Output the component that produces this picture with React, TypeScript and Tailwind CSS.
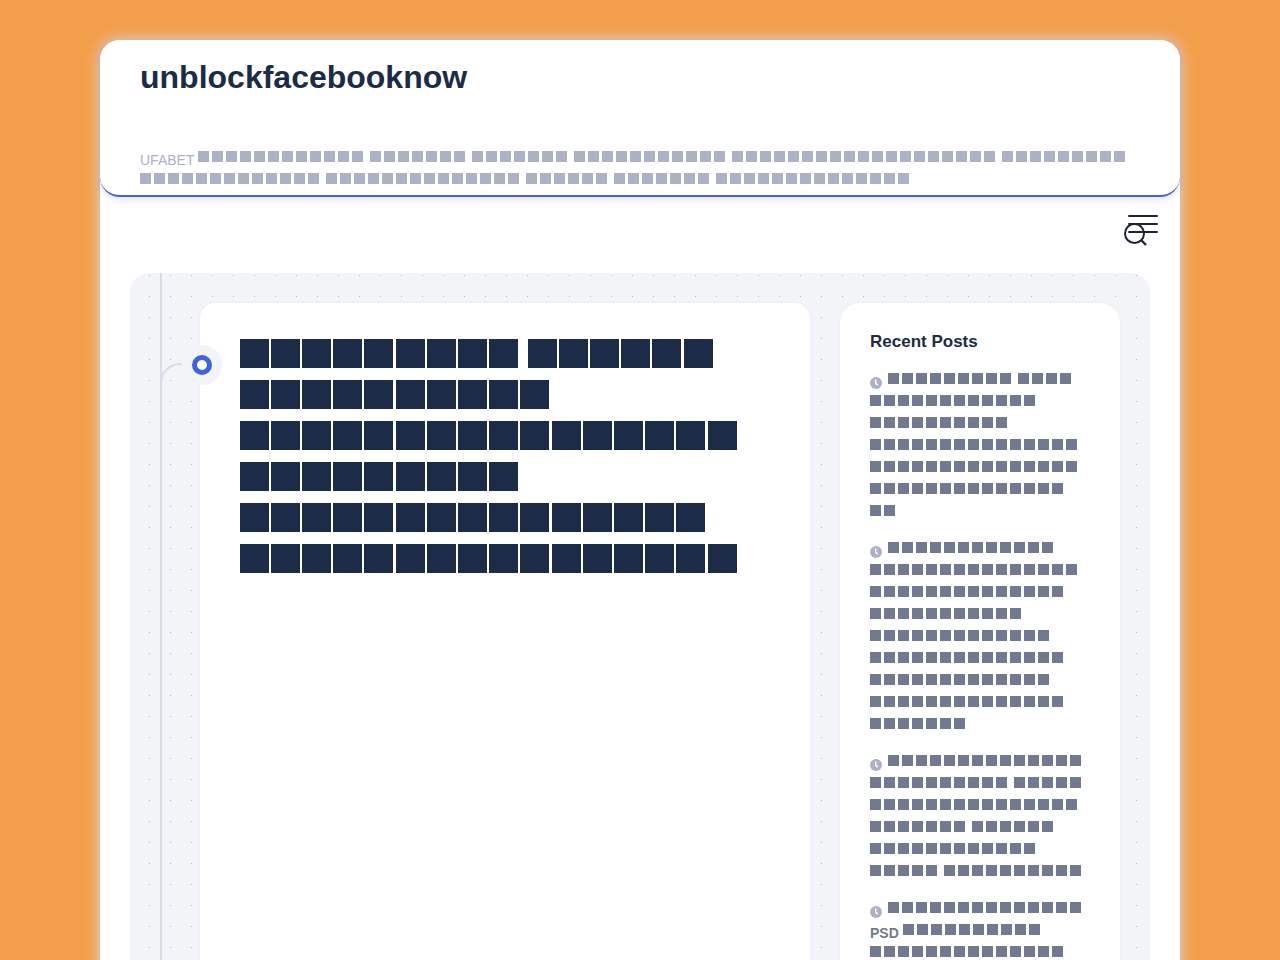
type Line = (number | string)[];

const description: Line[] = [
	['UFABET', 12, 7, 7, 11, 19, 9],
	[13, 14, 6, 7, 14],
];

const title: Line[] = [[9, 6], [10], [16], [9], [15], [16]];

const recentPosts: Line[][] = [
	[[9, 4], [12], [10], [15], [15], [14], [2]],
	[[12], [15], [14], [11], [13], [14], [13], [14], [7]],
	[[14], [10, 5], [15], [7, 6], [12], [5, 10]],
	[[14], ['PSD', 10], [14]],
];

function Word({ count, large }: { count: number; large?: boolean }) {
	return (
		<span className={large ? 'mt-[6px] inline-flex align-top' : 'mt-[2px] inline-flex align-top'}>
			{Array.from({ length: count }, (_, i) => (
				<span
					key={i}
					className={
						large
							? 'mr-[2px] size-[29px] bg-current text-center text-[20px] leading-[29px] nth-[5n]:mr-[3px]'
							: 'mr-[3px] size-[11px] bg-current text-center text-[8px] leading-[11px]'
					}
				>
					■
				</span>
			))}
		</span>
	);
}

function Words({ line, large }: { line: Line; large?: boolean }) {
	return (
		<>
			{line.map((part, i) => (
				<span key={i}>
					{i > 0 && ' '}
					{typeof part === 'number' ? <Word count={part} large={large} /> : part}
				</span>
			))}
		</>
	);
}

function ClockIcon() {
	return (
		<svg viewBox="0 0 12 12" className="mt-[6px] mr-[6px] inline-block size-3 align-top" aria-hidden="true">
			<circle cx="6" cy="6" r="6" fill="#aeb1c6" />
			<path d="M5.7 2.4v3.8l1.9 1.9" fill="none" stroke="#fff" strokeWidth="1.5" />
		</svg>
	);
}

export default function App() {
	return (
		<div className="min-h-screen bg-[#f39e4b] px-6 pt-10 font-['Liberation_Sans',Arial,sans-serif]">
			<div className="mx-auto max-w-[1080px] rounded-t-[20px] bg-white shadow-[0_0_15px_#d5dcec]">
				{/* Site header */}
				<header className="rounded-[20px] border-b-2 border-[#4563c9] bg-white px-10 pt-[18px] pb-[2px] shadow-[0_2px_6px_rgba(64,98,224,0.2)]">
					<a href="#" className="block text-[32px] leading-[38px] font-bold text-[#1c2b47]">
						unblockfacebooknow
					</a>
					<div className="mt-[53px] text-[14px] leading-[22px] text-[#aeb1c6]">
						{description.map((line, i) => (
							<p key={i}>
								<Words line={line} />
							</p>
						))}
					</div>
				</header>

				{/* Menu and search */}
				<nav className="flex h-[76px] justify-end pt-[17px] pr-[21px]">
					<button type="button" aria-label="Menu and search" className="h-8 w-9">
						<svg viewBox="0 0 36 32" className="h-8 w-9" fill="none" stroke="#1c2438" strokeWidth="2">
							<path d="M6 2h28M6 10h28M6 18h28" strokeLinecap="round" />
							<circle cx="11.5" cy="19.5" r="9.5" />
							<path d="M18 26l5 5" strokeWidth="2.4" />
						</svg>
					</button>
				</nav>

				<div className="px-[30px] pb-[30px]">
					<div className="relative flex items-stretch gap-[30px] rounded-[20px] bg-[#f3f4f8] bg-[radial-gradient(circle_at_center,#b4b8c6_0.8px,transparent_1px)] bg-[length:21px_21px] bg-[position:9px_-8px] py-[30px] pr-[30px] pl-[70px]">
						{/* Timeline */}
						<div className="absolute inset-y-0 left-[30px] w-[2px] bg-[#dadbe6]" />
						<div className="absolute top-[90px] left-[30px] h-5 w-[22px] rounded-tl-[20px] border-t-2 border-l-2 border-[#dadbe6]" />

						<main className="relative min-w-0 flex-1 rounded-[15px] bg-white px-10 py-[30px] shadow-[0_0_3px_rgba(28,43,71,0.06)]">
							<span className="absolute top-[42px] left-[-18px] flex size-10 items-center justify-center rounded-full bg-[#f3f4f8]">
								<span className="size-5 rounded-full border-5 border-[#4062e0] bg-white" />
							</span>
							<h1 className="text-[28px] leading-[41px] font-bold text-[#1c2b47]">
								{title.map((line, i) => (
									<span key={i} className="block">
										<Words line={line} large />
									</span>
								))}
							</h1>
						</main>

						<aside className="w-[280px] shrink-0 rounded-[20px] bg-white p-[30px] shadow-[0_0_3px_rgba(28,43,71,0.06)]">
							<h2 className="text-[17px] leading-[18px] font-bold text-[#1c2b47]">Recent Posts</h2>
							<ul className="mt-5 space-y-[15px] text-[14px] leading-[22px] font-bold text-[#737990]">
								{recentPosts.map((post, i) => (
									<li key={i}>
										<a href="#" className="-mr-2 block">
											{post.map((line, j) => (
												<span key={j} className="block">
													{j === 0 && <ClockIcon />}
													<Words line={line} />
												</span>
											))}
										</a>
									</li>
								))}
							</ul>
						</aside>
					</div>
				</div>
			</div>
		</div>
	);
}
